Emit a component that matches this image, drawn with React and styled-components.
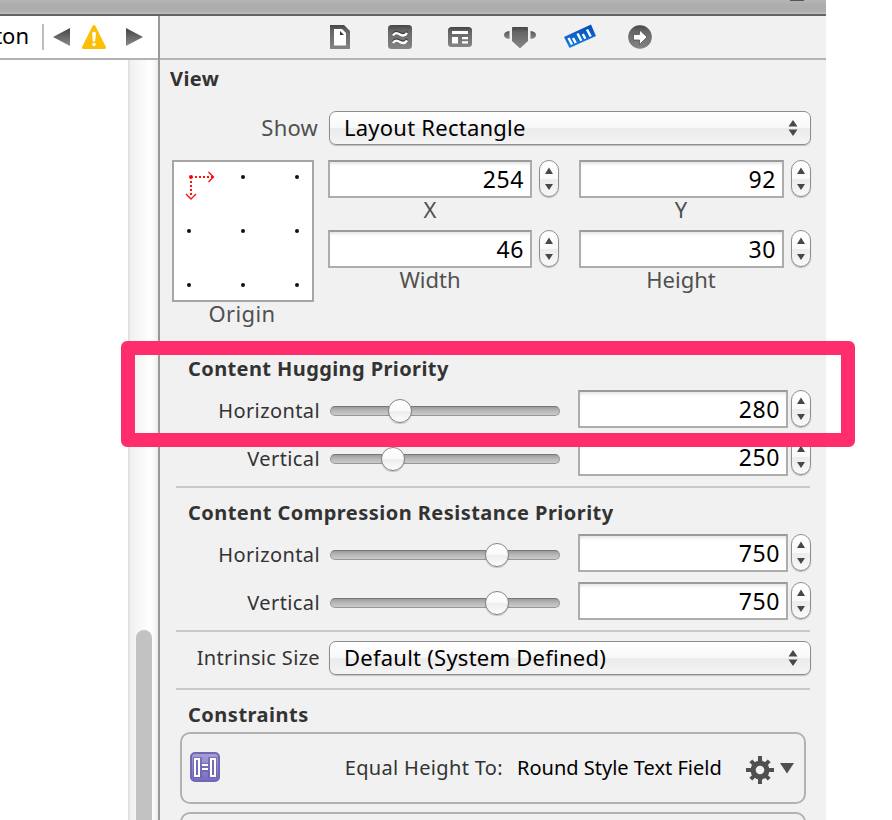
import React from "react";
import styled, { createGlobalStyle } from "styled-components";

const Global = createGlobalStyle`
  * { box-sizing: border-box; }
  body { margin: 0; background: #fff; overflow: hidden; }
`;

const Page = styled.div`
  position: relative;
  width: 892px;
  height: 820px;
  overflow: hidden;
  background: #fff;
  font-family: "Noto Sans", "Open Sans", sans-serif;
  color: #333;
`;
const Window = styled.div`
  width: 826px;
  height: 820px;
  display: flex;
  flex-direction: column;
`;
const TitleStrip = styled.div`
  height: 16px;
  flex: none;
  display: flex;
  justify-content: flex-end;
  padding-right: 22px;
  background: linear-gradient(#b5b5b5, #acacac 6px, #b0b0b0 12px, #bcbcbc 13px, #bcbcbc 14px, #656565 14px);
`;
const StripMark = styled.div`
  width: 14px;
  height: 1px;
  background: #555;
`;
const Body = styled.div`
  flex: 1;
  min-height: 0;
  display: grid;
  grid-template-columns: 158px 668px;
`;
const Editor = styled.div`
  display: flex;
  flex-direction: column;
`;
const JumpBar = styled.div`
  height: 44px;
  flex: none;
  display: flex;
  border-bottom: 2px solid #b3b3b3;
  overflow: hidden;
`;
const Crumb = styled.div`
  width: 30px;
  flex: none;
  display: flex;
  justify-content: flex-end;
  padding-right: 1px;
  overflow: hidden;
  color: #000;
  font-size: 22px;
  line-height: 38px;
`;
const Canvas = styled.div`
  flex: 1;
  display: flex;
  justify-content: flex-end;
`;
const ScrollTrack = styled.div`
  width: 30px;
  padding: 570px 6px 0;
  border-left: 2px solid #e2e2e2;
  background: linear-gradient(90deg, #f1f1f1, #fafafa 50%, #fff 70%, #fafafa 85%, #ededed);
`;
const ScrollThumb = styled.div`
  width: 16px;
  height: 190px;
  border-radius: 8px 8px 0 0;
  background: #c2c2c2;
`;
const Inspector = styled.div`
  border-left: 2px solid #999;
  background: #f1f1f1;
  display: flex;
  flex-direction: column;
  min-height: 0;
  overflow: hidden;
`;
const Tabs = styled.div`
  height: 44px;
  flex: none;
  border-bottom: 2px solid #b3b3b3;
  padding-left: 162px;
  display: flex;
`;
const Heading = styled.div`
  flex: none;
  height: ${(p) => p.$h}px;
  padding-left: ${(p) => p.$x}px;
  padding-top: ${(p) => p.$top}px;
  font-size: 20px;
  line-height: 28px;
  font-weight: 700;
  letter-spacing: ${(p) => p.$ls || 0.4}px;
  color: #333;
  white-space: nowrap;
`;
const PopupRow = styled.div`
  flex: none;
  height: 34px;
  display: flex;
  align-items: center;
  margin: ${(p) => p.$margin};
`;
const RowLabel = styled.div`
  width: ${(p) => p.$w || 160}px;
  margin-right: ${(p) => p.$gap || 9}px;
  flex: none;
  text-align: right;
  white-space: nowrap;
  font-size: ${(p) => p.$size || 20}px;
  line-height: 28px;
  letter-spacing: ${(p) => p.$ls ?? 0.4}px;
  color: ${(p) => p.$color || "#333"};
`;
const ShowLabel = styled(RowLabel)`
  padding-bottom: 2px;
`;
const Popup = styled.div`
  width: 482px;
  height: 34px;
  border-radius: 7px;
  border: 1.5px solid #8d8d8d;
  box-shadow: 0 1px 1px rgba(0, 0, 0, 0.2);
  background: linear-gradient(#fff, #f8f8f8 50%, #ebebeb 50%, #f4f4f4);
  padding: 0 11px 0 14px;
  display: flex;
  align-items: center;
  justify-content: space-between;
  color: #000;
  font-size: 22px;
  line-height: 30px;
  letter-spacing: 0.24px;
  white-space: nowrap;
`;
const PopupText = styled.div`
  padding-bottom: 2px;
`;
const GeoRow = styled.div`
  display: flex;
  flex: none;
  height: 185px;
  margin-top: 15px;
  padding-left: 12px;
`;
const OriginCell = styled.div`
  width: 142px;
`;
const OriginBox = styled.div`
  width: 142px;
  height: 142px;
  border: 2px solid #a6a6a6;
  background: #fff;
`;
const Caption = styled.div`
  text-align: center;
  margin-top: -1px;
  padding-right: ${(p) => p.$shift || 0}px;
  font-size: 22px;
  line-height: 24px;
  letter-spacing: ${(p) => p.$ls || 0}px;
  color: #505050;
`;
const FieldsGrid = styled.div`
  display: grid;
  grid-template-columns: 218px 28px 224px 28px;
  grid-template-rows: 70px 70px;
`;
const FieldCell = styled.div`
  margin-left: ${(p) => p.$ml}px;
`;
const Field = styled.div`
  width: ${(p) => p.$w}px;
  height: 38px;
  flex: none;
  border: 2px solid #adadad;
  border-top-color: #9b9b9b;
  background: #fff;
  box-shadow: inset 0 3px 3px -1px #e6e6e6;
  text-align: right;
  padding-right: 6px;
  color: #000;
  font-size: 23px;
  line-height: 34px;
  letter-spacing: 0.6px;
`;
const StepperBody = styled.div`
  width: 20px;
  height: 37px;
  flex: none;
  border: 1.5px solid #8f8f8f;
  border-radius: 10px;
  box-shadow: 0 1px 1px rgba(0, 0, 0, 0.25);
  background: linear-gradient(#fff, #fafafa 50%, #ececec 51%, #f8f8f8);
  display: flex;
  align-items: center;
  justify-content: center;
  margin-left: ${(p) => p.$ml}px;
`;
const PriorityRow = styled.div`
  flex: none;
  height: 38px;
  display: flex;
  margin-bottom: 10px;
`;
const PriorityLabel = styled(RowLabel)`
  padding-top: 7px;
  margin-right: 10px;
`;
const Track = styled.div`
  position: relative;
  width: 230px;
  height: 10px;
  margin: 16px 18px 0 0;
  border-radius: 5px;
  border: 1px solid #969696;
  border-top-color: #777;
  background: linear-gradient(#9c9c9c, #b9b9b9 50%, #cbcbcb);
`;
const Knob = styled.div`
  position: absolute;
  top: -8px;
  left: ${(p) => p.$x}px;
  width: 24px;
  height: 24px;
  border-radius: 50%;
  border: 1.5px solid #858585;
  box-shadow: 0 1px 1px rgba(0, 0, 0, 0.2);
  background: linear-gradient(#fff, #f9f9f9 48%, #eee 50%, #fbfbfb);
`;
const Rule = styled.div`
  flex: none;
  height: 2px;
  margin-left: 16px;
  width: 634px;
  background: #c9c9c9;
`;
const Card = styled.div`
  flex: none;
  width: 626px;
  height: 72px;
  margin: 0 0 8px 20px;
  border: 2px solid #b2b2b2;
  border-radius: 10px;
  display: flex;
  align-items: center;
  padding-left: 8px;
  font-size: 20px;
  line-height: 28px;
  white-space: nowrap;
`;
const CardLabel = styled.div`
  width: 283px;
  text-align: right;
  letter-spacing: 0.34px;
`;
const CardValue = styled.div`
  margin-left: 14px;
  width: 228px;
  color: #000;
`;
const BadgeSlot = styled.div`
  width: 30px;
  height: 32px;
`;
const GearSlot = styled.div`
  padding-top: 4px;
  height: 34px;
`;
const Highlight = styled.div`
  position: absolute;
  left: 121px;
  top: 341px;
  width: 734px;
  height: 106px;
  border: 14px solid #ff2d6c;
  border-radius: 6px;
`;

const Stepper = ({ ml }) => (
  <StepperBody $ml={ml}>
    <svg width="10" height="26" viewBox="0 0 10 26">
      <path d="M5 1.5 9 8H1zM5 24 9 18H1z" fill="#484848" />
    </svg>
  </StepperBody>
);
const PopupArrows = () => (
  <svg width="12" height="18" viewBox="0 0 12 18">
    <path d="M6 1 10.5 7.5h-9zM6 17l4.5-6.5h-9z" fill="#484848" />
  </svg>
);

const GeoField = ({ label, value, w, ml, ls, shift }) => (
  <>
    <FieldCell $ml={ml}>
      <Field $w={w}>{value}</Field>
      <Caption $ls={ls} $shift={shift}>{label}</Caption>
    </FieldCell>
    <Stepper ml={7} />
  </>
);

const Priority = ({ label, knob, value }) => (
  <PriorityRow>
    <PriorityLabel>{label}</PriorityLabel>
    <Track><Knob $x={knob} /></Track>
    <Field $w={210}>{value}</Field>
    <Stepper ml={3} />
  </PriorityRow>
);

const JumpIcons = () => (
  <svg width="128" height="42" viewBox="30 16 128 42">
    <defs>
      <linearGradient id="arrow" x1="0" y1="0" x2="0" y2="1">
        <stop offset="0" stopColor="#444" /><stop offset="1" stopColor="#8b8b8b" />
      </linearGradient>
    </defs>
    <path d="M42 24h2v26h-2z" fill="#bdbdbd" />
    <path d="M53 37 70 28v18z" fill="url(#arrow)" />
    <path d="M143 37 126 28v18z" fill="url(#arrow)" />
    <path d="M94 26.5 104.5 47.5h-21z" fill="#fdbf06" stroke="#fdbf06" strokeWidth="3" strokeLinejoin="round" />
    <path d="M92 33q2-2.300 4 0l-.9 8.500h-2.200z" fill="#fff" />
    <circle cx="94" cy="44.5" r="1.8" fill="#fff" />
  </svg>
);

const TabIcons = () => (
  <svg width="340" height="42" viewBox="322 16 340 42">
    <defs>
      <linearGradient id="metal" x1="0" y1="0" x2="0" y2="1">
        <stop offset="0" stopColor="#454545" /><stop offset=".25" stopColor="#666" /><stop offset="1" stopColor="#858585" />
      </linearGradient>
      <linearGradient id="blue" x1="0" y1="0" x2="0" y2="1">
        <stop offset="0" stopColor="#0549ba" /><stop offset="1" stopColor="#1681e2" />
      </linearGradient>
    </defs>
    <path d="M330 25h14l6 6v18h-20z" fill="url(#metal)" />
    <path d="M334 29h8l4 4v12.500h-12z" fill="#fff" />
    <path d="M340 31v4h4z" fill="#333" />
    <rect x="388" y="25" width="24" height="24" rx="3.5" fill="url(#metal)" />
    <path d="M393 34c2-3.500 4.500-2.500 7-1 3 1.800 5 1.500 7-1.500M393 41.500c2-3.500 4.500-2.500 7-1 3 1.800 5 1.500 7-1.500" fill="none" stroke="#3c3c3c" strokeWidth="2" />
    <path d="M393 35.500c2-3.500 4.500-2.500 7-1 3 1.800 5 1.500 7-1.500M393 43c2-3.500 4.500-2.500 7-1 3 1.800 5 1.500 7-1.500" fill="none" stroke="#fff" strokeWidth="2.300" />
    <rect x="448" y="27" width="24" height="20" rx="3.500" fill="url(#metal)" />
    <path d="M452 31h16v3h-16zM452 37h6v6.500h-6zM462 37h6v2.300h-6zM462 41.200h6v2.300h-6z" fill="#fff" />
    <path d="M512 28q0-1 1-1h14q1 0 1 1v13l-7.500 7h-1L512 41z" fill="url(#metal)" />
    <path d="M509.500 31v8q-5.500-.5-5.500-4t5.500-4zM530.500 31v8q5.500-.5 5.500-4t-5.500-4z" fill="url(#metal)" />
    <path d="M564 37 591 24.500 596 36 569.500 48z" fill="url(#blue)" />
    <path d="M568.500 38.500 572 45M573 38.500 575.800 43.500M577.500 34 581.300 41.200M582.800 34.500 585.300 39.300M587 30 590.700 37" transform="translate(0 -.5)" stroke="#fff" strokeWidth="2.400" />
    <circle cx="640" cy="37" r="11.800" fill="url(#metal)" />
    <path d="M633.500 34.500h6v-4.500l7.500 7-7.500 7.500v-4.500h-6z" fill="#fff" stroke="#444" strokeWidth=".7" />
  </svg>
);

const OriginDots = () => (
  <svg width="138" height="138" viewBox="174 162 138 138" display="block">
    <g fill="#111">
      {[177, 231, 285].map((y) =>
        [189, 243, 297].map((x) => (x === 189 && y === 177 ? null : <circle key={`${x}-${y}`} cx={x} cy={y} r="2" />))
      )}
    </g>
    <g stroke="#f11" fill="none" strokeWidth="2">
      <path d="M195 177h18M191 181v16" strokeDasharray="2 2" />
      <path d="M208.500 172l5 5-5 5M186 194l5 5 5-5" strokeWidth="1.400" />
    </g>
    <circle cx="191" cy="177" r="2" fill="#f00" />
  </svg>
);

const ConstraintIcon = () => (
  <svg width="30" height="30" viewBox="0 0 30 30" display="block">
    <defs>
      <linearGradient id="violet" x1="0" y1="0" x2="0" y2="1">
        <stop offset="0" stopColor="#a6a0d8" /><stop offset="1" stopColor="#746cc4" />
      </linearGradient>
    </defs>
    <rect x="1" y="1" width="28" height="28" rx="4" fill="url(#violet)" stroke="#7067b5" strokeWidth="2" />
    <path d="M3 5h9v6h6V5h9v21h-9v-6h-6v6H3z" fill="#625aa5" opacity=".6" />
    <path d="M5 7h4v17H5zM21 7h4v17h-4z" fill="none" stroke="#fff" strokeWidth="2" />
    <path d="M12 13h6M12 17h6" stroke="#fff" strokeWidth="2" />
  </svg>
);

const GearMenu = () => (
  <svg width="50" height="30" viewBox="745 755 50 30">
    <g transform="translate(760 770)" fill="#505050">
      {[0, 45, 90, 135].map((a) => (
        <rect key={a} x="-2" y={a % 90 ? -13 : -14} width="4" height={a % 90 ? 26 : 28} transform={`rotate(${a})`} />
      ))}
      <circle r="9.500" />
      <circle r="4.300" fill="#f1f1f1" />
    </g>
    <path d="M780 763h14l-7 10.500z" fill="#505050" />
  </svg>
);

export default function App() {
  return (
    <Page>
      <Global />
      <Window>
        <TitleStrip><StripMark /></TitleStrip>
        <Body>
          <Editor>
            <JumpBar><Crumb>ton</Crumb><JumpIcons /></JumpBar>
            <Canvas><ScrollTrack><ScrollThumb /></ScrollTrack></Canvas>
          </Editor>
          <Inspector>
            <Tabs><TabIcons /></Tabs>
            <Heading $h={51} $x={10} $top={5}>View</Heading>
            <PopupRow $margin="0">
              <ShowLabel $w={158} $gap={11} $size={22} $ls={0.2} $color="#505050">Show</ShowLabel>
              <Popup><PopupText>Layout Rectangle</PopupText><PopupArrows /></Popup>
            </PopupRow>
            <GeoRow>
              <OriginCell>
                <OriginBox><OriginDots /></OriginBox>
                <Caption $ls={0.4} $shift={2}>Origin</Caption>
              </OriginCell>
              <FieldsGrid>
                <GeoField label="X" value="254" w={204} ml={14} />
                <GeoField label="Y" value="92" w={205} ml={19} shift={1} />
                <GeoField label="Width" value="46" w={204} ml={14} />
                <GeoField label="Height" value="30" w={205} ml={19} shift={1} />
              </FieldsGrid>
            </GeoRow>
            <Heading $h={45} $x={28} $top={10}>Content Hugging Priority</Heading>
            <Priority label="Horizontal" knob={57} value="280" />
            <Priority label="Vertical" knob={50} value="250" />
            <Rule />
            <Heading $h={46} $x={28} $top={11} $ls={0.46}>Content Compression Resistance Priority</Heading>
            <Priority label="Horizontal" knob={154} value="750" />
            <Priority label="Vertical" knob={154} value="750" />
            <Rule />
            <PopupRow $margin="9px 0 13px">
              <RowLabel $ls={0.34}>Intrinsic Size</RowLabel>
              <Popup><PopupText>Default (System Defined)</PopupText><PopupArrows /></Popup>
            </PopupRow>
            <Rule />
            <Heading $h={42} $x={28} $top={11} $ls={0.5}>Constraints</Heading>
            <Card>
              <BadgeSlot><ConstraintIcon /></BadgeSlot>
              <CardLabel>Equal Height To:</CardLabel>
              <CardValue>Round Style Text Field</CardValue>
              <GearSlot><GearMenu /></GearSlot>
            </Card>
            <Card />
          </Inspector>
        </Body>
      </Window>
      <Highlight />
    </Page>
  );
}
